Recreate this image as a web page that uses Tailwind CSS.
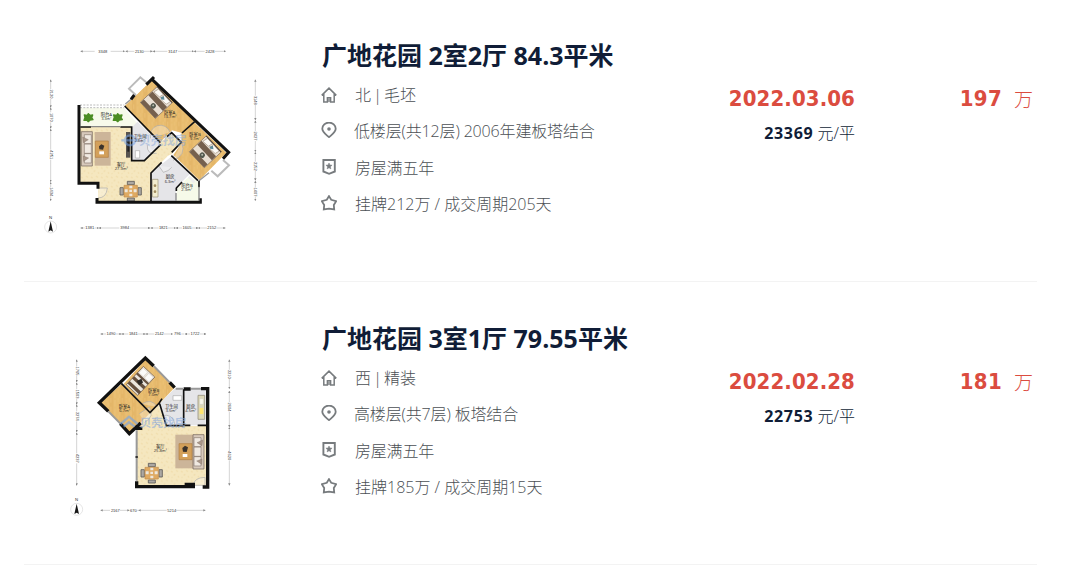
<!DOCTYPE html>
<html lang="zh-CN">
<head>
    <meta charset="UTF-8">
    <meta name="viewport" content="width=device-width, initial-scale=1.0">
    <title>广地花园 成交记录</title>
    <script src="https://cdn.jsdelivr.net/npm/@tailwindcss/browser@4"></script>
</head>
<body class="bg-white overflow-hidden font-['Open_Sans','Noto_Sans_CJK_SC',sans-serif]">
    <!-- Shared icons and furniture -->
    <svg class="absolute size-0">
        <defs>
            <symbol id="i-home" viewBox="0 0 16 16">
                <path d="M.7 8.4 8 1.1l7.3 7.3M2.8 7v7.9h3.6v-4.2h3.2v4.2h3.6V7" fill="none" stroke="#777b7e" stroke-width="1.5"/>
                <path d="M7.3 11.5h1.4V15H7.3z" fill="#777b7e"/>
            </symbol>
            <symbol id="i-pin" viewBox="0 0 16 16">
                <path d="M8 15.2C5.5 12.9 1.3 10.2 1.3 6.7a6.7 6.1 0 0 1 13.4 0c0 3.5-4.2 6.2-6.7 8.5z" fill="none" stroke="#777b7e" stroke-width="1.8"/>
                <circle cx="8" cy="7" r="1.8" fill="#777b7e"/>
            </symbol>
            <symbol id="i-badge" viewBox="0 0 16 16">
                <path d="M2.4 1h11.4v11.5l-5.7 2.3-5.7-2.3z" fill="none" stroke="#777b7e" stroke-width="1.9"/>
                <path d="m8 4 .9 2 2.2.2-1.7 1.5.5 2.2L8 8.8 6.1 9.9l.5-2.2-1.7-1.5L7.1 6z" fill="#777b7e" stroke="#777b7e" stroke-width=".5"/>
            </symbol>
            <symbol id="i-star" viewBox="0 0 16 16">
                <path d="m8 1.1 2.2 3.7 5 1.3-2.4 3.9.4 4.5L8 13.6l-5.2.9.4-4.5L.8 6.1l5-1.3z" fill="none" stroke="#777b7e" stroke-width="1.8"/>
            </symbol>
            <pattern id="wood" width="34" height="26" patternUnits="userSpaceOnUse">
                <rect width="34" height="26" fill="#e8bc6e"/>
                <path d="M0 0h12v26H0z" fill="#e4b668"/>
                <path d="M5 0v14M17 6v20M26 0v12M31 14v12" stroke="#edc47c" stroke-width="2"/>
            </pattern>
            <pattern id="tile" width="30" height="28" patternUnits="userSpaceOnUse">
                <rect width="30" height="28" fill="#f5e7bf"/>
                <path d="M3 6l5 3M18 3l6 4M11 18l5-3M24 20l3 4M5 23l2 2" stroke="#f1deae" stroke-width="4"/>
            </pattern>
            <g id="bed">
                <path d="M0 0h70v66H0z" fill="#e9dfd3" stroke="#7c6a59" stroke-width="2"/>
                <path d="M0 1h14v64H0zM32 1h17v64H32z" fill="#75604e"/>
                <path d="M51 5l16 3v22l-14-3zM51 36l16-3v27l-14-3z" fill="#fcfaf6" stroke="#a99a8a" stroke-width="2"/>
                <path d="M54 30l10 5-6 9-6-7z" fill="#5d8999"/>
                <circle cx="21" cy="34" r="8" fill="#53584e"/>
                <circle cx="22" cy="33" r="3" fill="#b9bdb0"/>
                <path d="M69 0v66" stroke="#4a3a2d" stroke-width="3"/>
            </g>
            <g id="dining">
                <path d="M23 1h21v10H23zM23 51h21v9H23zM1 20h10v22H1zM55 20h10v22H55z" fill="#aca8a3" stroke="#5f5c59" stroke-width="2.5"/>
                <path d="M13 13h40v35H13z" fill="#dfaa62" stroke="#c08a4a" stroke-width="2"/>
                <path d="M29 14h9v8h-9zM29 38h9v8h-9zM15 25h9v9h-9zM42 25h9v9h-9zM29 26h8v7h-8z" fill="#eee7dc"/>
            </g>
            <g id="sofa">
                <path d="M0 0h33v103H0z" fill="#d7c9bb" stroke="#6c5e55" stroke-width="2"/>
                <path d="M9 9h21v27H9zM9 37h21v28H9zM9 66h21v28H9z" fill="#f0e9e1" stroke="#8a7a6f" stroke-width="2"/>
                <path d="M4 16l17 8-15 9zM6 73l16 6-15 10z" fill="#a99688" stroke="#76665b"/>
            </g>
            <g id="compass">
                <circle r="18" fill="#fff" stroke="#ccc" stroke-width="1.5"/>
                <path d="M0-17l7 31-7-4-7 4z" fill="#171717"/>
            </g>
            <marker id="arr" viewBox="0 0 8 8" refX="7" refY="4" markerWidth="7" markerHeight="7" markerUnits="userSpaceOnUse" orient="auto-start-reverse">
                <path d="M0 0l8 4-8 4z" fill="#888"/>
            </marker>
        </defs>
    </svg>

    <main class="mx-6 -mt-px w-[1013px]">
        <!-- Listing 1 -->
        <article class="flex h-[283px] border-b border-[#f3f3f3] pl-1.5">
            <svg class="mt-9 h-[210px] w-[250px] shrink-0" viewBox="0 0 750 630">
                <!-- Dimensions -->
                <g stroke="#aaa" stroke-width="1.5" fill="none">
                    <path d="M152 49h42M242 49h42M287 49h26M342 49h26M368 49h44M444 49h47M492 49h32M555 49h32"/>
                    <path d="M152 579h12M194 579h12M206 579h62M300 579h60M362 579h24M414 579h23M438 579h18M486 579h18M504 579h27M560 579h26"/>
                    <path d="M62 134v28M62 192v25M62 218v14M62 262v18M62 282v62M62 374v66M62 442v14M62 484v13"/>
                    <path d="M676 134v48M676 210v45M676 257v32M676 318v32M676 352v28M676 408v28M676 438v20M676 484v13"/>
                </g>
                <g stroke="none" fill="none" marker-start="url(#arr)" marker-end="url(#arr)">
                    <path d="M152 49h132"/><path d="M287 49h80"/><path d="M369 49h122"/><path d="M492 49h95"/>
                    <path d="M152 579h54"/><path d="M207 579h153"/><path d="M362 579h75"/><path d="M438 579h66"/><path d="M505 579h81"/>
                    <path d="M62 134v83"/><path d="M62 218v62"/><path d="M62 282v158"/><path d="M62 442v55"/>
                    <path d="M676 134v121"/><path d="M676 257v93"/><path d="M676 352v84"/><path d="M676 438v59"/>
                </g>
                <g font-size="12" fill="#333" text-anchor="middle" font-family="Liberation Sans">
                    <text x="218" y="53">3348</text><text x="328" y="53">2130</text><text x="428" y="53">3147</text><text x="540" y="53">2428</text>
                    <text x="179" y="583">1381</text><text x="284" y="583">3984</text><text x="400" y="583">1821</text><text x="471" y="583">1605</text><text x="545" y="583">2152</text>
                    <text transform="translate(59 177) rotate(90)">2120</text><text transform="translate(59 247) rotate(90)">1070</text><text transform="translate(59 359) rotate(90)">4251</text><text transform="translate(59 470) rotate(90)">1434</text>
                    <text transform="translate(673 196) rotate(90)">3148</text><text transform="translate(673 303) rotate(90)">2427</text><text transform="translate(673 394) rotate(90)">2152</text><text transform="translate(673 471) rotate(90)">1407</text>
                    <text x="62" y="553" font-size="13">N</text>
                </g>
                <use href="#compass" x="62" y="576"/>
                <!-- Rooms -->
                <path d="M149 275h156v102h40l84-82 24 27-90 93v83H204v-53h-55z" fill="url(#tile)"/>
                <path d="M152 219h130l39 45-15 12H152z" fill="#f7faeb"/>
                <path d="M307 276l15-16 68 64-49 52h-34zM363 413l67-53 50 56-42 43v39h-75z" fill="#e5e5e8"/>
                <path d="M440 460l38-36 29 18v55h-67z" fill="#f6fae9"/>
                <path d="M367 134l126 124-37 36-30-8-36 36-106-109z" fill="url(#wood)"/>
                <path d="M493 262l96 91-81 83-78-76 25-36-1-29z" fill="url(#wood)"/>
                <path d="M387 325l38-30 29 28-29 35-36 13z" fill="url(#tile)"/>
                <!-- Bay windows -->
                <path d="M352 145l-21-18-34 34 21 20M579 375l18 16-34 33-19-17" fill="#fff" stroke="#bbb" stroke-width="6"/>
                <path d="M286 207l24-20M507 437l30-24" stroke="#999" stroke-width="4"/>
                <path d="M150 210h133M150 218h133" stroke="#999" stroke-width="2" stroke-dasharray="6 4"/>
                <!-- Furniture -->
                <path d="M194 291h48v101h-48z" fill="#ccb599"/>
                <use href="#sofa" x="154" y="290"/>
                <path d="M196 318h39v49h-39z" fill="#d3a05a" stroke="#b07f44" stroke-width="2"/>
                <path d="M207 334l7-6 9 4-4 12-11-1z" fill="#3b332c"/><path d="M208 349h14v9h-14z" fill="#fff"/>
                <path d="M288 291h13v77h-13z" fill="#57534f"/><path d="M292 306h6v44h-6z" fill="#222"/>
                <use href="#dining" x="269" y="438"/>
                <use href="#bed" transform="translate(331 202) rotate(-43)"/>
                <use href="#bed" transform="translate(478 350) rotate(-43)"/>
                <path d="M316 347h13v22h-13z" fill="#fff" stroke="#aaa" stroke-width="2"/>
                <path d="M367 433h17v53h-17z" fill="#f2edcf" stroke="#998e72" stroke-width="2"/>
                <circle cx="375" cy="452" r="4" fill="#a18d60"/><circle cx="375" cy="470" r="4" fill="#a18d60"/>
                <path d="M175 236l5 5 8-1-3 8 4 6-9 1-5 5-5-5-8 1 3-9-2-7 9 1zM263 236l5 5 8-1-3 8 4 6-9 1-5 5-5-5-8 1 3-9-2-7 9 1z" fill="#4b8d24" stroke="#4b8d24" stroke-width="4" stroke-linejoin="round"/>
                <!-- Doors -->
                <path d="M204 459h28q-3 30-28 30M386 392l14 20q16-3 25-15M455 323q15 38-26 53M352 330q-2 30 28 25M362 310a30 30 0 0 1 58-18" fill="#fff" fill-opacity=".3" stroke="#aaa" stroke-width="2"/>
                <!-- Walls -->
                <g fill="none" stroke="#111" stroke-width="9">
                    <path d="M147 210v235h57v16M201 489v13h310v-12"/>
                    <path d="M363 130l233 222-17 19M372 126l-23 23M313 180l-10 13"/>
                    <path d="M151 276h32M271 276h34v101h38l49-48M494 260l-38 34M411 305l14-12 29 29-29 30M363 498v-84l32-32M424 362l80 75M439 458v10M439 459l17-18M507 437v20M284 213l107 110" stroke-width="5"/>
                </g>
                <path d="M507 455v42M438 474v24M183 275h88" stroke="#888" stroke-width="4"/>
                <path d="M477 425l16 18" stroke="#eee" stroke-width="8"/>
                <!-- Watermark -->
                <g fill="none" stroke="#71a1e7" stroke-width="7" opacity=".55"><circle cx="300" cy="316" r="15"/><path d="M274 316h52"/></g>
                <text x="326" y="331" font-size="36" font-weight="700" fill="#8cabdc" fill-opacity=".55">贝壳找房</text>
                <!-- Labels -->
                <g font-size="13" fill="#222" text-anchor="middle">
                    <text x="229" y="244">阳台A</text><text x="229" y="256" font-size="11">3.3m²</text>
                    <text x="419" y="236">卧室A</text><text x="420" y="249" font-size="12">13.7m²</text>
                    <text x="495" y="303">卧室B</text><text x="495" y="315" font-size="11">9.7m²</text>
                    <text x="330" y="309">卫生间</text><text x="329" y="321" font-size="11">2.8m²</text>
                    <text x="273" y="393">客厅</text><text x="274" y="406" font-size="12">27.9m²</text>
                    <text x="420" y="430">厨房</text><text x="420" y="443" font-size="12">6.3m²</text>
                    <text x="471" y="456">阳台B</text><text x="470" y="468" font-size="12">2.3m²</text>
                </g>
            </svg>
            <div class="ml-[41px] w-[361px] pt-[38px]">
                <h2 class="whitespace-nowrap pl-px text-[25px] leading-9 font-bold text-[#101d37]">广地花园 2室2厅 84.3平米</h2>
                <ul class="mt-1 text-base leading-9 font-light text-[#4b4f54]">
                    <li class="flex h-9 items-center [word-spacing:-2px]"><svg class="mr-[18px] size-4"><use href="#i-home"/></svg>北 | 毛坯</li>
                    <li class="flex h-9 items-center tracking-[-0.15px]"><svg class="mr-[17px] mb-0.5 size-4"><use href="#i-pin"/></svg>低楼层(共12层) 2006年建板塔结合</li>
                    <li class="flex h-[37px] items-center pt-px tracking-[-0.2px]"><svg class="mr-[18px] mb-0.5 size-4"><use href="#i-badge"/></svg>房屋满五年</li>
                    <li class="flex h-9 items-center"><svg class="mr-[18px] mb-0.5 size-4"><use href="#i-star"/></svg>挂牌212万 / 成交周期205天</li>
                </ul>
            </div>
            <div class="w-[173px] pt-[84px] text-right">
                <p class="font-['DejaVu_Sans_Condensed'] text-[22px] leading-8 font-bold tracking-[0.1px] text-[#db4c3f]">2022.03.06</p>
                <p class="mt-0.5 text-base leading-8 font-light text-[#101d37]"><b class="font-bold tracking-[0.7px]">23369</b> 元/平</p>
            </div>
            <div class="flex w-[178px] justify-end gap-3 pt-[84px] leading-8 text-[#db4c3f]">
                <b class="font-['DejaVu_Sans_Condensed'] text-[22px] font-bold tracking-[0.3px]">197</b>
                <span class="pt-px text-[19px] font-light">万</span>
            </div>
        </article>

        <!-- Listing 2 -->
        <article class="flex h-[283px] border-b border-[#f3f3f3] pl-1.5">
            <svg class="mt-9 h-[210px] w-[250px] shrink-0" viewBox="0 -6 750 630">
                <!-- Dimensions -->
                <g stroke="#aaa" stroke-width="1.5" fill="none">
                    <path d="M212 42h16M258 42h16M275 42h20M324 42h22M347 42h26M402 42h26M454 42h9M465 42h15M510 42h18"/>
                    <path d="M212 571h28M270 571h28M322 571h88M438 571h88"/>
                    <path d="M140 119v20M140 168v18M140 188v19M140 237v16M140 254v20M140 304v32M140 338v62M140 430v66"/>
                    <path d="M598 119v30M598 176v30M598 213v34M598 275v46M598 322v71M598 421v75"/>
                </g>
                <g stroke="none" fill="none" marker-start="url(#arr)" marker-end="url(#arr)">
                    <path d="M212 42h62"/><path d="M275 42h71"/><path d="M347 42h81"/><path d="M465 42h63"/>
                    <path d="M212 571h86"/><path d="M326 571h200"/>
                    <path d="M140 119v67"/><path d="M140 188v65"/><path d="M140 254v82"/><path d="M140 338v158"/>
                    <path d="M598 119v87"/><path d="M598 213v108"/><path d="M598 322v174"/>
                </g>
                <g font-size="12" fill="#333" text-anchor="middle" font-family="Liberation Sans">
                    <text x="243" y="46">1490</text><text x="310" y="46">1841</text><text x="388" y="46">2142</text><text x="442" y="46">796</text><text x="495" y="46">1722</text>
                    <text x="256" y="575">2167</text><text x="310" y="575">670</text><text x="425" y="575">5214</text>
                    <text transform="translate(137 153) rotate(90)">1765</text><text transform="translate(137 222) rotate(90)">1503</text><text transform="translate(137 289) rotate(90)">2274</text><text transform="translate(137 415) rotate(90)">4237</text>
                    <text transform="translate(595 163) rotate(90)">2210</text><text transform="translate(595 261) rotate(90)">2604</text><text transform="translate(595 407) rotate(90)">4620</text>
                    <text x="140" y="544" font-size="13">N</text>
                </g>
                <use href="#compass" x="140" y="568"/>
                <!-- Rooms -->
                <path d="M321 320l64-66 27 64h116v178H321z" fill="url(#tile)"/>
                <path d="M389 249l45-43h93v110H411z" fill="#e5e5e8"/>
                <path d="M347 118l88 84-74 77-80-87z" fill="url(#wood)"/>
                <path d="M210 249l65-57 86 87-61 61z" fill="url(#wood)"/>
                <!-- Furniture -->
                <g transform="translate(289 194) rotate(-47)">
                    <path d="M0 0h75v47H0z" fill="#ece7df" stroke="#6a5748" stroke-width="2"/>
                    <path d="M5 0h10v47H5zM25 0h10v47H25zM43 0h7v47h-7z" fill="#665140"/>
                    <path d="M29 15l15 6-5 11-14-3z" fill="#2e2a27"/>
                    <path d="M52 3h19v18H52zM52 26h19v18H52z" fill="#fcfbf9" stroke="#bbb0a5"/>
                </g>
                <path d="M436 344h57v101h-57z" fill="#ccb599"/>
                <use href="#sofa" transform="translate(522 344) scale(-1 1)"/>
                <path d="M447 371h39v48h-39z" fill="#d3a05a" stroke="#b07f44" stroke-width="2"/>
                <path d="M457 384l8-7 9 5-4 14-11-1z" fill="#3b332c"/><path d="M458 402h14v9h-14z" fill="#fff"/>
                <use href="#dining" x="332" y="429"/>
                <path d="M429 227h26v14h-26z" fill="#fff" stroke="#aaa" stroke-width="2"/>
                <path d="M504 226h20v72h-20z" fill="#ddd8b8" stroke="#888270" stroke-width="2"/>
                <path d="M509 236h11v17h-11z" fill="#faf8e9" stroke="#bbb"/><path d="M509 264h11v18h-11z" fill="#ffe46d"/>
                <!-- Doors -->
                <path d="M490 496q2-23 35-24v24zM335 252q30-19 47 9M328 281l30-20q17 28-14 46M395 287q34-8 40 27M378 292q-10 18 14 26" fill="#fff" fill-opacity=".3" stroke="#aaa" stroke-width="2"/>
                <!-- Walls -->
                <g fill="none" stroke="#111" stroke-width="10">
                    <path d="M371 138l-25-24-138 134 27 26M271 311l27 30 34-32M323 324v-4M314 325h23M320 484v16h170v-7h-26M518 501h15V206h-20M419 187l15 16M482 207h-21"/>
                    <path d="M274 190l86 88 27-28 9-14M389 251l20 66h52M461 208v108h20M503 316h28" stroke-width="5"/>
                </g>
                <path d="M371 138l48 49M235 274l36 37M320 331v151M483 206h30M437 206h22" stroke="#999" stroke-width="6"/>
                <path d="M320 408v6" stroke="#333" stroke-width="7"/>
                <!-- Watermark -->
                <path d="M272 312l25-22 26 22M281 320l16-13 17 13" fill="none" stroke="#71a1e7" stroke-width="7" opacity=".6"/>
                <text x="329" y="320" font-size="35" font-weight="700" fill="#8cabdc" fill-opacity=".6">贝壳找房</text>
                <!-- Labels -->
                <g font-size="13" fill="#222" text-anchor="middle">
                    <text x="283" y="263">卧室A</text><text x="284" y="276" font-size="12">6.7m²</text>
                    <text x="371" y="217">卧室B</text><text x="371" y="229" font-size="12">7.0m²</text>
                    <text x="424" y="263">卫生间</text><text x="423" y="276" font-size="12">3.5m²</text>
                    <text x="482" y="263">厨房</text><text x="482" y="276" font-size="12">4.5m²</text>
                    <text x="391" y="384">客厅</text><text x="391" y="397" font-size="12">25.8m²</text>
                </g>
            </svg>
            <div class="ml-[41px] w-[361px] pt-[38px]">
                <h2 class="whitespace-nowrap pl-px text-[25px] leading-9 font-bold text-[#101d37]">广地花园 3室1厅 79.55平米</h2>
                <ul class="mt-1 text-base leading-9 font-light text-[#4b4f54]">
                    <li class="flex h-9 items-center [word-spacing:-2px]"><svg class="mr-[18px] size-4"><use href="#i-home"/></svg>西 | 精装</li>
                    <li class="flex h-9 items-center tracking-[-0.15px]"><svg class="mr-[17px] mb-0.5 size-4"><use href="#i-pin"/></svg>高楼层(共7层) 板塔结合</li>
                    <li class="flex h-[37px] items-center pt-px tracking-[-0.2px]"><svg class="mr-[18px] mb-0.5 size-4"><use href="#i-badge"/></svg>房屋满五年</li>
                    <li class="flex h-9 items-center"><svg class="mr-[18px] mb-0.5 size-4"><use href="#i-star"/></svg>挂牌185万 / 成交周期15天</li>
                </ul>
            </div>
            <div class="w-[173px] pt-[84px] text-right">
                <p class="font-['DejaVu_Sans_Condensed'] text-[22px] leading-8 font-bold tracking-[0.1px] text-[#db4c3f]">2022.02.28</p>
                <p class="mt-0.5 text-base leading-8 font-light text-[#101d37]"><b class="font-bold tracking-[0.7px]">22753</b> 元/平</p>
            </div>
            <div class="flex w-[178px] justify-end gap-3 pt-[84px] leading-8 text-[#db4c3f]">
                <b class="font-['DejaVu_Sans_Condensed'] text-[22px] font-bold tracking-[0.3px]">181</b>
                <span class="pt-px text-[19px] font-light">万</span>
            </div>
        </article>
    </main>
</body>
</html>
